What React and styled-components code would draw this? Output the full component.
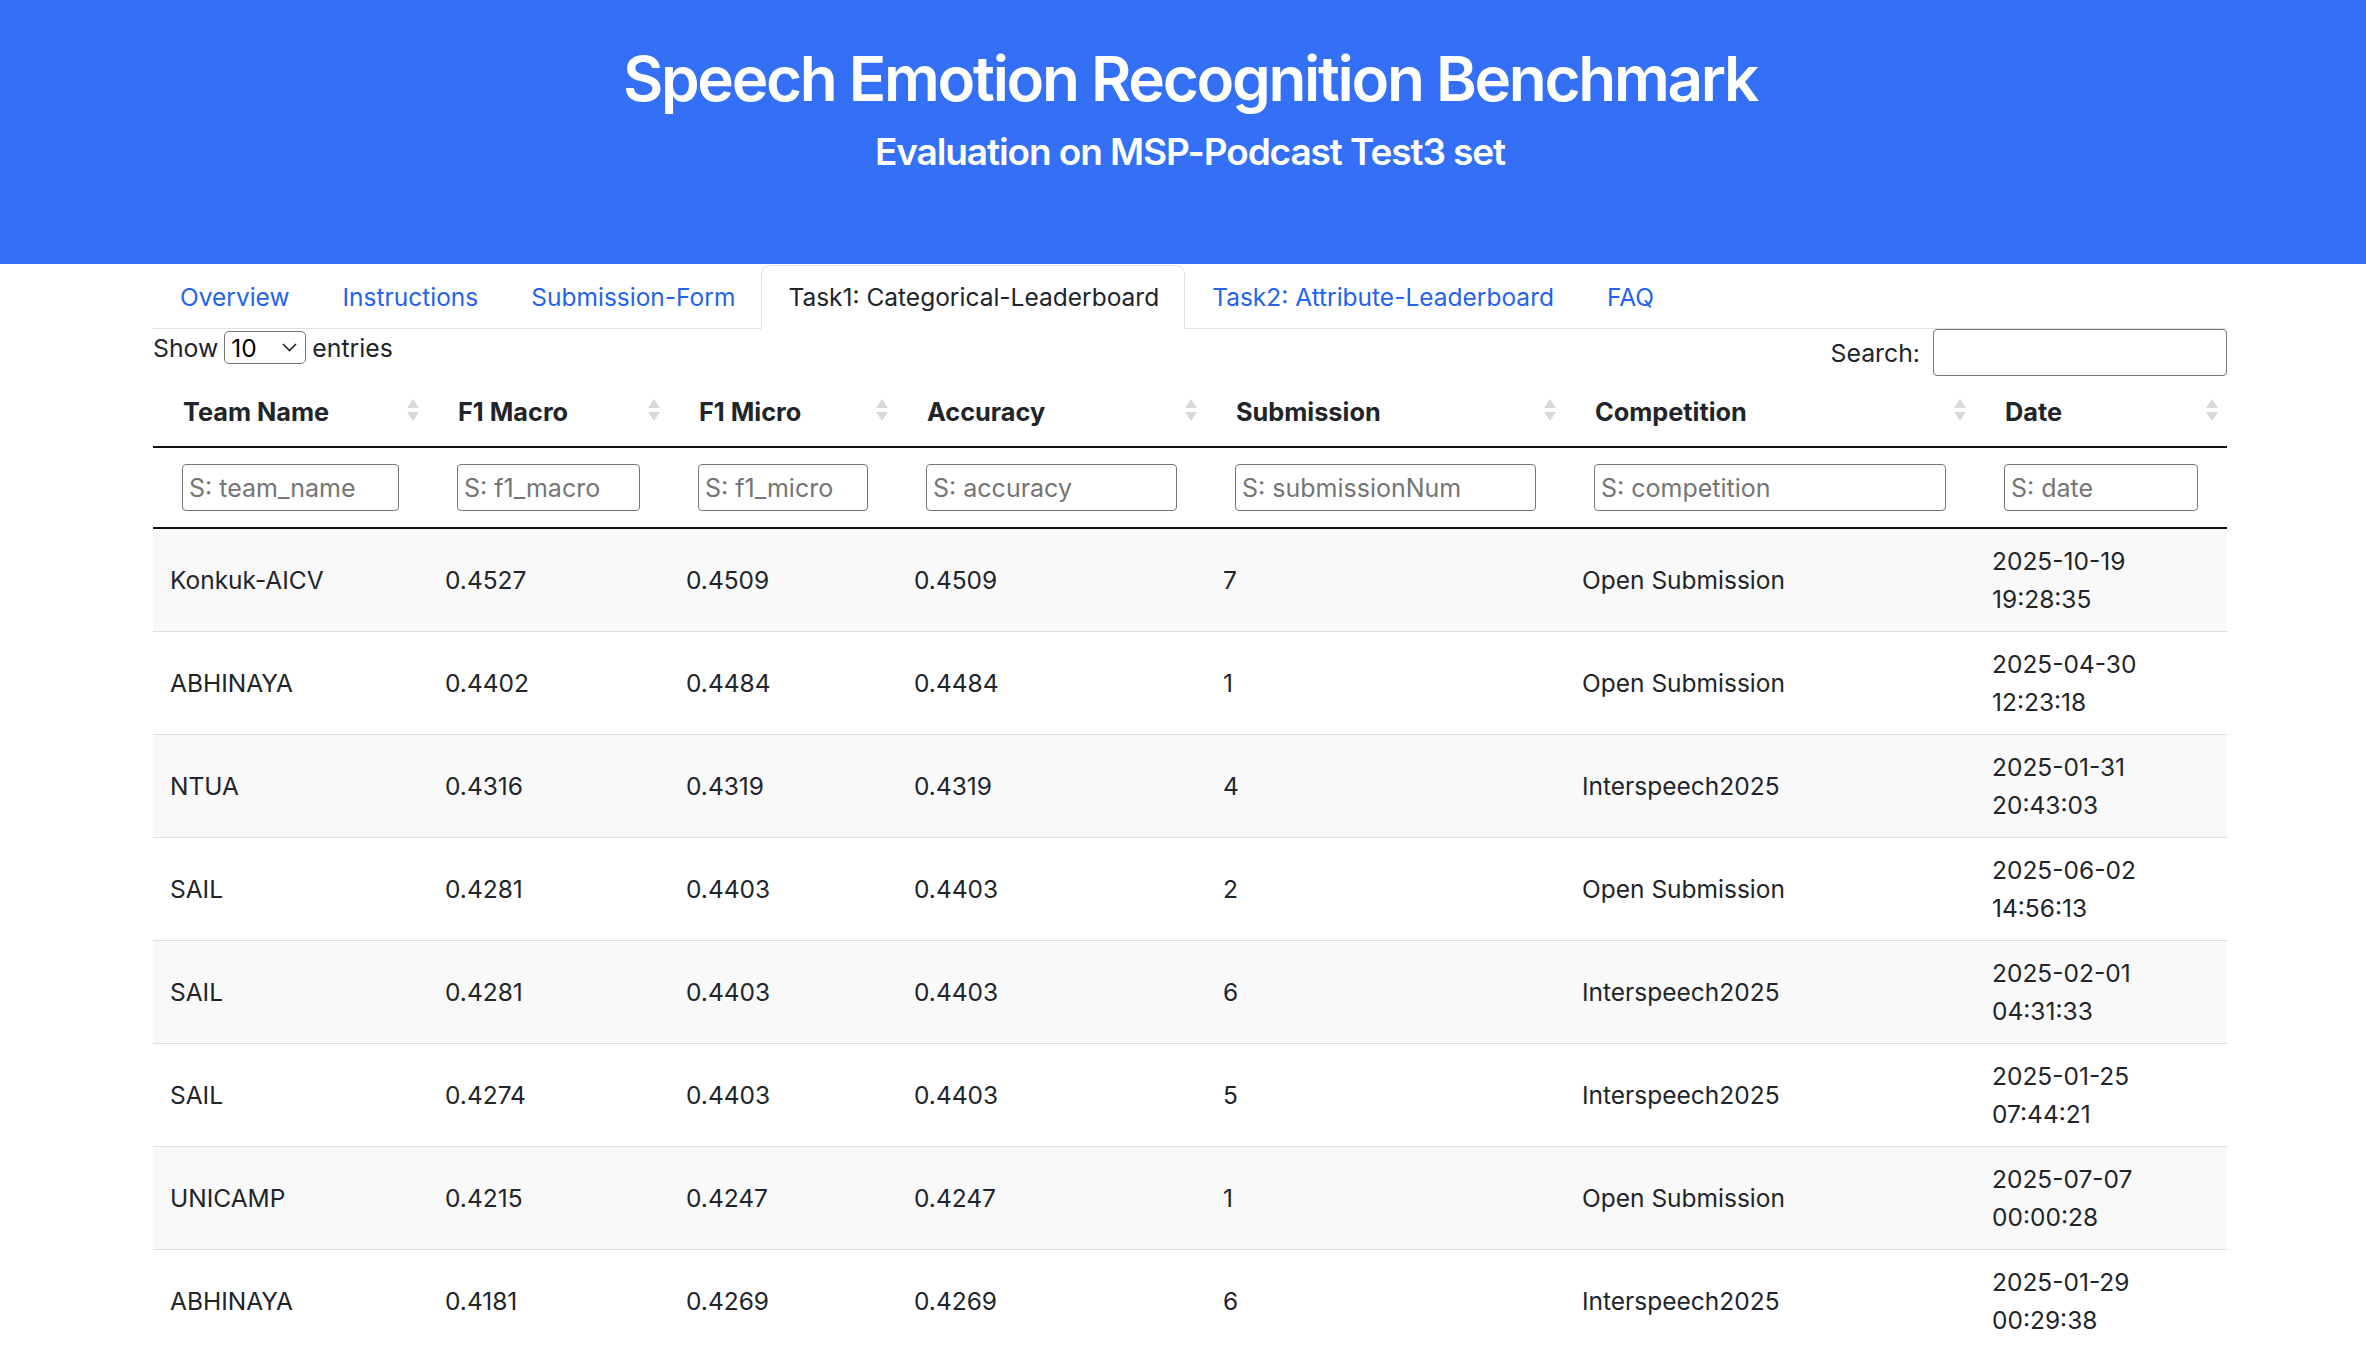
import React from "react";
import styled, { createGlobalStyle } from "styled-components";

const Global = createGlobalStyle`
  html, body { margin: 0; padding: 0; overflow: hidden; background: #fff; }
  body { font-family: Inter, "Noto Sans", "Liberation Sans", sans-serif; color: #212529; }
  * { box-sizing: border-box; }
`;

const Header = styled.header`
  height: 264px;
  background: #3370f5;
  color: #fff;
  text-align: center;
  padding: 42px 0 0 14px;
`;

const Title = styled.h1`
  margin: 0;
  font-size: 62px;
  font-weight: 600;
  line-height: 1.2;
  letter-spacing: -2.3px;
`;

const Subtitle = styled.h2`
  margin: 14px 0 0;
  font-size: 37px;
  font-weight: 600;
  line-height: 1.2;
  letter-spacing: -1.1px;
`;

const Main = styled.main`
  margin: 0 139px 0 153px;
`;

const Tabs = styled.nav`
  display: flex;
  border-bottom: 1px solid #dee2e6;
  padding-top: 1px;
`;

const Tab = styled.a`
  display: flex;
  align-items: center;
  height: 64px;
  margin-bottom: -1px;
  padding: 0 25px 0 26px;
  font-size: 24.5px;
  color: ${(p) => (p.$active ? "#212529" : "#2563eb")};
  background: ${(p) => (p.$active ? "#fff" : "transparent")};
  border: 1px solid ${(p) => (p.$active ? "#dee2e6" : "transparent")};
  border-bottom-color: ${(p) => (p.$active ? "#fff" : "transparent")};
  border-radius: 9px 9px 0 0;
  text-decoration: none;
  cursor: pointer;
`;

const Controls = styled.div`
  display: flex;
  justify-content: space-between;
  align-items: flex-start;
  font-size: 24.8px;
`;

const Length = styled.label`
  display: flex;
  align-items: center;
  gap: 6px;
  margin-top: 2px;
`;

const SelectBox = styled.div`
  display: flex;
  align-items: center;
  justify-content: space-between;
  width: 82px;
  height: 33px;
  padding: 0 8px 0 6px;
  border: 1px solid #767676;
  border-radius: 5px;
  font-size: 24.5px;
  color: #000;
`;

const SearchLabel = styled.label`
  display: flex;
  align-items: center;
  gap: 13px;
`;

const SearchInput = styled.input`
  width: 294px;
  height: 47px;
  border: 1px solid #767676;
  border-radius: 4px;
  font-size: 24px;
  font-family: inherit;
  padding: 0 8px;
`;

const Table = styled.table`
  width: 100%;
  border-collapse: collapse;
  table-layout: fixed;
  font-size: 24.5px;
`;

const HeadCell = styled.th`
  height: 71px;
  padding: 0 9px 0 30px;
  text-align: left;
  font-size: 25.3px;
  font-weight: 700;
  border-bottom: 2px solid #111;
`;

const HeadInner = styled.div`
  display: flex;
  align-items: center;
  justify-content: space-between;
`;

const FilterCell = styled.th`
  padding: 16px 29px 16px 29px;
  border-bottom: 2px solid #111;
  font-weight: 400;
`;

const FilterInput = styled.input`
  display: block;
  width: 100%;
  height: 47px;
  border: 1px solid #767676;
  border-radius: 4px;
  font-size: 25px;
  font-family: inherit;
  padding: 0 6px;
  &::placeholder { color: #757575; }
`;

const Row = styled.tr`
  background: ${(p) => (p.$odd ? "#f9f9f9" : "#fff")};
`;

const Cell = styled.td`
  padding: 13px 17px;
  line-height: 38px;
  vertical-align: middle;
  border-top: 1px solid #ddd;
`;

const SortIcon = () => (
  <svg width="12" height="24" viewBox="0 0 12 24" aria-hidden="true">
    <polygon points="6,0 12,9 0,9" fill="#d9d9d9" />
    <polygon points="0,13 12,13 6,22" fill="#d9d9d9" />
  </svg>
);

const Chevron = () => (
  <svg width="15" height="9" viewBox="0 0 15 9" aria-hidden="true">
    <polyline points="1,1 7.5,7.5 14,1" fill="none" stroke="#222" strokeWidth="1.6" />
  </svg>
);

const cols = [
  { label: "Team Name", key: "team_name", w: 275 },
  { label: "F1 Macro", key: "f1_macro", w: 241 },
  { label: "F1 Micro", key: "f1_micro", w: 228 },
  { label: "Accuracy", key: "accuracy", w: 309 },
  { label: "Submission", key: "submissionNum", w: 359 },
  { label: "Competition", key: "competition", w: 410 },
  { label: "Date", key: "date", w: 252 },
];

const rows = [
  ["Konkuk-AICV", "0.4527", "0.4509", "0.4509", "7", "Open Submission", "2025-10-19", "19:28:35"],
  ["ABHINAYA", "0.4402", "0.4484", "0.4484", "1", "Open Submission", "2025-04-30", "12:23:18"],
  ["NTUA", "0.4316", "0.4319", "0.4319", "4", "Interspeech2025", "2025-01-31", "20:43:03"],
  ["SAIL", "0.4281", "0.4403", "0.4403", "2", "Open Submission", "2025-06-02", "14:56:13"],
  ["SAIL", "0.4281", "0.4403", "0.4403", "6", "Interspeech2025", "2025-02-01", "04:31:33"],
  ["SAIL", "0.4274", "0.4403", "0.4403", "5", "Interspeech2025", "2025-01-25", "07:44:21"],
  ["UNICAMP", "0.4215", "0.4247", "0.4247", "1", "Open Submission", "2025-07-07", "00:00:28"],
  ["ABHINAYA", "0.4181", "0.4269", "0.4269", "6", "Interspeech2025", "2025-01-29", "00:29:38"],
];

const tabs = [
  "Overview",
  "Instructions",
  "Submission-Form",
  "Task1: Categorical-Leaderboard",
  "Task2: Attribute-Leaderboard",
  "FAQ",
];

export default function App() {
  return (
    <>
      <Global />
      <Header>
        <Title>Speech Emotion Recognition Benchmark</Title>
        <Subtitle>Evaluation on MSP-Podcast Test3 set</Subtitle>
      </Header>
      <Main>
        <Tabs>
          {tabs.map((t, i) => (
            <Tab key={t} $active={i === 3}>{t}</Tab>
          ))}
        </Tabs>
        <Controls>
          <Length>
            Show
            <SelectBox>
              <span>10</span>
              <Chevron />
            </SelectBox>
            entries
          </Length>
          <SearchLabel>
            Search:
            <SearchInput type="search" />
          </SearchLabel>
        </Controls>
        <Table>
          <colgroup>
            {cols.map((c) => (
              <col key={c.key} style={{ width: c.w }} />
            ))}
          </colgroup>
          <thead>
            <tr>
              {cols.map((c) => (
                <HeadCell key={c.key}>
                  <HeadInner>
                    <span>{c.label}</span>
                    <SortIcon />
                  </HeadInner>
                </HeadCell>
              ))}
            </tr>
            <tr>
              {cols.map((c) => (
                <FilterCell key={c.key}>
                  <FilterInput placeholder={`S: ${c.key}`} />
                </FilterCell>
              ))}
            </tr>
          </thead>
          <tbody>
            {rows.map((r, i) => (
              <Row key={i} $odd={i % 2 === 0}>
                {r.slice(0, 6).map((v, j) => (
                  <Cell key={j}>{v}</Cell>
                ))}
                <Cell>
                  {r[6]}
                  <br />
                  {r[7]}
                </Cell>
              </Row>
            ))}
          </tbody>
        </Table>
      </Main>
    </>
  );
}
